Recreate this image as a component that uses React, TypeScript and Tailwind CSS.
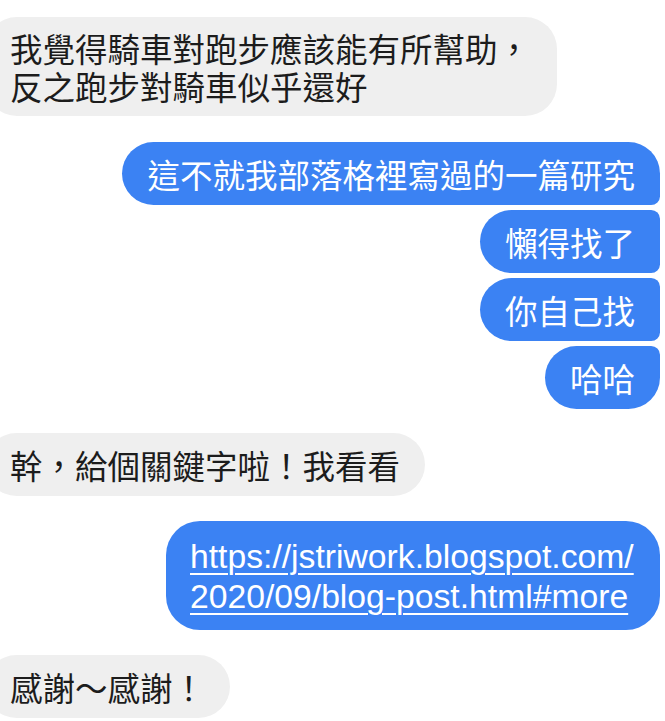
import React from 'react';

type Side = 'in' | 'out';

interface Msg {
  side: Side;
  text: React.ReactNode;
  corners: string;
  gap: string;
  extra?: string;
}

const cjk = "font-['Noto_Sans_CJK_TC','Noto_Sans',sans-serif]";

const messages: Msg[] = [
  {
    side: 'in',
    text: (
      <>
        <div>我覺得騎車對跑步應該能有所幫助，</div>
        <div>反之跑步對騎車似乎還好</div>
      </>
    ),
    corners: 'rounded-[32px]',
    gap: 'mt-[17px]',
    extra: 'w-[572px] leading-[38px] pt-[12px] pb-[11px]',
  },
  { side: 'out', text: '這不就我部落格裡寫過的一篇研究', corners: 'rounded-[32px] rounded-br-[9px]', gap: 'mt-[26px]' },
  { side: 'out', text: '懶得找了', corners: 'rounded-l-[32px] rounded-r-[9px]', gap: 'mt-[5px]' },
  { side: 'out', text: '你自己找', corners: 'rounded-l-[32px] rounded-r-[9px]', gap: 'mt-[5px]' },
  { side: 'out', text: '哈哈', corners: 'rounded-[32px] rounded-tr-[9px]', gap: 'mt-[5px]' },
  { side: 'in', text: '幹，給個關鍵字啦！我看看', corners: 'rounded-[32px]', gap: 'mt-[24px]' },
];

const Bubble: React.FC<{ msg: Msg }> = ({ msg }) => {
  const isOut = msg.side === 'out';
  const box = msg.extra ?? 'leading-[36px] pt-[14px] pb-[13px]';
  return (
    <div className={`flex ${isOut ? 'justify-end' : 'justify-start'} ${msg.gap}`}>
      <div
        className={`${msg.corners} ${box} px-[25px] text-[32.5px] ${cjk} ${
          isOut ? 'bg-[#3b82f3] text-white' : 'bg-[#efefef] text-[#1c1c1c] -ml-[15px]'
        }`}
      >
        {msg.text}
      </div>
    </div>
  );
};

export default function App() {
  return (
    <div className="w-[665px] h-[721px] overflow-hidden bg-white pr-[5px]">
      <div className="flex flex-col">
        {messages.map((m, i) => (
          <Bubble key={i} msg={m} />
        ))}

        <div className="flex justify-end mt-[25px]">
          <div className="w-[494px] rounded-[34px] bg-[#3b82f3] pl-[24px] pr-[18px] pt-[15px] pb-[14px] text-[33.7px] leading-[40px] text-white font-['Liberation_Sans',Arial,sans-serif]">
            <span className="underline decoration-2 underline-offset-[5px]">https://jstriwork.blogspot.com/</span>
            <br />
            <span className="underline decoration-2 underline-offset-[5px]">2020/09/blog-post.html#more</span>
          </div>
        </div>

        <div className="flex justify-start mt-[25px]">
          <div className={`-ml-[15px] rounded-[32px] bg-[#efefef] px-[25px] pt-[14px] pb-[13px] text-[32.5px] leading-[36px] text-[#1c1c1c] ${cjk}`}>
            感謝～感謝！
          </div>
        </div>
      </div>
    </div>
  );
}
